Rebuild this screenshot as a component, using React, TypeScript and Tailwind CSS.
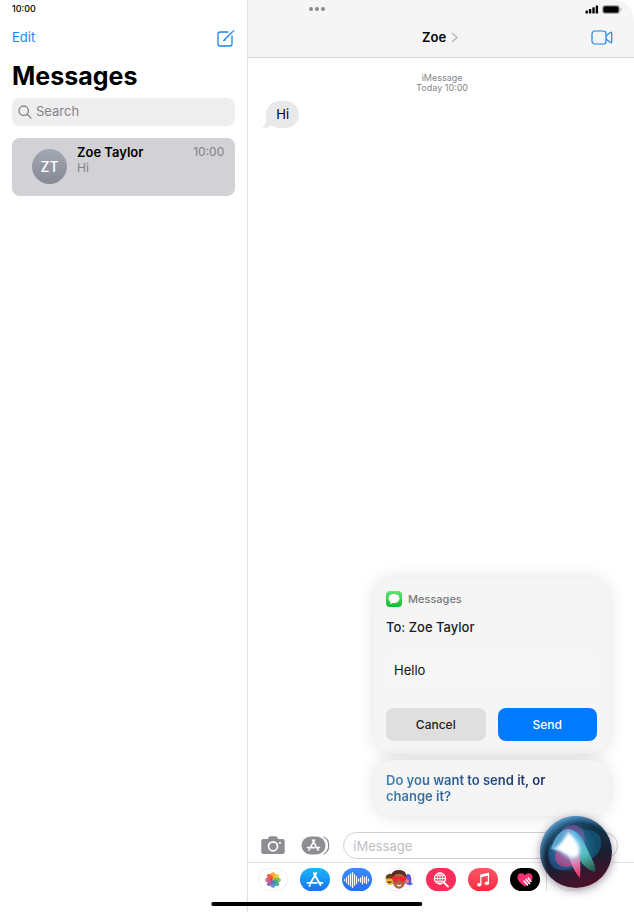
import { useState } from "react";

export default function App() {
  return (
    <div className="relative flex min-h-screen overflow-hidden bg-white font-['Inter','Liberation_Sans',sans-serif] text-black">
      <Sidebar />
      <Conversation />
      <MultitaskDots />
      <SiriPanel />
      <div className="absolute bottom-[6px] left-1/2 h-1 w-1/3 -translate-x-1/2 rounded-full bg-black" />
    </div>
  );
}

function Sidebar() {
  const [query, setQuery] = useState("");

  return (
    <aside className="flex w-[39%] shrink-0 flex-col px-3">
      <div className="flex h-[18px] items-center text-[9px] font-medium">10:00</div>

      <div className="flex h-10 items-center justify-between text-[#1a84f0]">
        <button className="text-[13px]">Edit</button>
        <button aria-label="New message">
          <ComposeIcon />
        </button>
      </div>

      <h1 className="text-[25px] leading-9 font-bold">Messages</h1>

      <label className="mt-1 flex h-7 items-center gap-1 rounded-lg bg-[#eeeeef] px-[6px] text-[#838387]">
        <SearchIcon />
        <input
          type="text"
          aria-label="Search"
          placeholder="Search"
          value={query}
          onChange={(e) => setQuery(e.target.value)}
          className="w-full min-w-0 bg-transparent text-[13px] outline-none placeholder:text-[#838387]"
        />
      </label>

      <button className="mt-3 flex h-[58px] items-start rounded-lg bg-[#d1d1d6] pr-[11px] pl-5 text-left">
        <span className="mt-[11px] flex h-[35px] w-[35px] shrink-0 items-center justify-center rounded-full bg-linear-to-b from-[#a4a8b4] to-[#858994] text-[14px] font-medium text-white">
          ZT
        </span>
        <span className="mt-[6px] ml-[10px] flex-1">
          <span className="flex items-center justify-between leading-4">
            <span className="text-[13px] font-semibold">Zoe Taylor</span>
            <span className="text-[12px] text-[#838387]">10:00</span>
          </span>
          <span className="block text-[12px] leading-4 text-[#838387]">Hi</span>
        </span>
      </button>
    </aside>
  );
}

function Conversation() {
  return (
    <main className="flex min-w-0 flex-1 flex-col border-l border-[#e2e2e4]">
      <header className="rounded-tr-[20px] border-b border-[#d8d8d8] bg-[#f5f5f5]">
        <div className="flex h-[18px] items-center justify-end gap-[3px] pr-3">
          <SignalIcon />
          <BatteryIcon />
        </div>
        <div className="grid h-[39px] grid-cols-3 items-center pr-[21px]">
          <span />
          <button className="flex items-center justify-center gap-[5px] pl-[19px] text-[13px] font-semibold">
            Zoe
            <svg width="7" height="11" viewBox="0 0 7 11" fill="none" stroke="#b5b5b8" strokeWidth="1.4">
              <path d="M1 1l5 4.5L1 10" />
            </svg>
          </button>
          <button aria-label="FaceTime" className="justify-self-end text-[#1a84f0]">
            <VideoIcon />
          </button>
        </div>
      </header>

      <section className="flex flex-1 flex-col px-[18px] pt-[15px]">
        <p className="pl-[2px] text-center text-[9px] leading-[10px] text-[#85858a]">
          <span className="block">iMessage</span>
          Today 10:00
        </p>
        <div className="relative mt-2 self-start">
          <svg className="absolute bottom-0 -left-[4px]" width="14" height="12" viewBox="0 0 14 12">
            <path d="M4 0v5c0 3-1.500 5.500-4 6.500 3.500.8 6.500-.2 8.500-2L14 4z" fill="#e9e9eb" />
          </svg>
          <p className="relative rounded-full bg-[#e9e9eb] px-[10px] text-[13px] leading-[27px]">Hi</p>
        </div>
      </section>

      <form className="flex h-[33px] items-center pr-4 pl-[13px] text-[#8d8d92]" onSubmit={(e) => e.preventDefault()}>
        <button type="button" aria-label="Camera">
          <CameraIcon />
        </button>
        <button type="button" aria-label="Apps" className="ml-4">
          <AppsIcon />
        </button>
        <input
          type="text"
          aria-label="iMessage"
          placeholder="iMessage"
          className="ml-[13px] h-[27px] min-w-0 flex-1 rounded-full border border-[#cfcfd2] px-[9px] text-[13px] text-black outline-none placeholder:text-[#bebec2]"
        />
      </form>

      <AppStrip />
    </main>
  );
}

function AppStrip() {
  return (
    <nav className="flex h-[50px] items-start gap-3 border-t border-[#e4e4e6] pt-[5px] pl-[10px]">
      <AppButton label="Photos" className="border border-[#efeff0] bg-white">
        <PhotosGlyph />
      </AppButton>
      <AppButton label="App Store" className="bg-linear-to-b from-[#1cb6fa] to-[#1b72f2]">
        <svg width="18" height="18" viewBox="0 0 18 18" fill="none" stroke="#fff" strokeWidth="1.8" strokeLinecap="round">
          <path d="M7.800 2l1.200 2.200L4.500 12M10.200 2L9 4.200l5.500 9.800M1.500 11.900h9.200M13.800 11.900h2.700M4 14l-.5.900" />
        </svg>
      </AppButton>
      <AppButton label="Audio" className="bg-linear-to-b from-[#3a8bff] to-[#2470ee]">
        <svg width="28" height="18" viewBox="0 0 28 18" stroke="#fff" strokeWidth="1.200" strokeLinecap="round">
          <path d="M1.500 8.500v1M3.500 6.500v5M5.500 4.500v9M7.500 3v12M9.500 1.500v15M11.500 3.500v11M13.500 5.500v7M15.500 8v2M17.500 7v4M19.500 5v8M21.500 6.500v5M23.500 5.500v7M25.500 8v2" />
        </svg>
      </AppButton>
      <AppButton label="Memoji" className="border border-[#efeff0] bg-white">
        <MemojiGlyph />
      </AppButton>
      <AppButton label="Images" className="bg-[#fb2d5b]">
        <svg width="18" height="18" viewBox="0 0 18 18" fill="none" stroke="#fff" strokeWidth="0.900">
          <circle cx="8" cy="7.500" r="5.500" strokeWidth="1.300" />
          <ellipse cx="8" cy="7.500" rx="2.500" ry="5.500" />
          <path d="M2.500 7.500h11M3.500 4.700h9M3.500 10.300h9M8 2v11" />
          <path d="M12.300 11.800l3.700 3.700" strokeWidth="1.800" strokeLinecap="round" />
        </svg>
      </AppButton>
      <AppButton label="Music" className="bg-linear-to-b from-[#fb5567] to-[#f9273f]">
        <svg width="16" height="18" viewBox="0 0 16 18" fill="#fff">
          <path d="M5.200 3.500L14 1.700v2.700L6.400 6v7.300H5.200z" />
          <path d="M12.800 3H14v9h-1.200z" />
          <ellipse cx="4.300" cy="13.800" rx="2.200" ry="1.800" />
          <ellipse cx="11.900" cy="12.300" rx="2.200" ry="1.800" />
        </svg>
      </AppButton>
      <AppButton label="Digital Touch" className="bg-black">
        <svg width="18" height="16" viewBox="0 0 18 16">
          <path d="M9 14.500C4 11 1.500 8.500 1.500 5.200c0-2.400 1.600-4 3.700-4C6.900 1.200 8.300 2 9 3.500c.7-1.500 2.100-2.300 3.800-2.300 2.100 0 3.700 1.600 3.700 4 0 3.300-2.500 5.800-7.500 9.300z" fill="#ff2f74" />
          <path d="M8 9l3.500 4M10.200 7.500l3.500 4.200M12.200 6l2.800 3.400" stroke="#fff" strokeWidth="1.500" strokeLinecap="round" />
        </svg>
      </AppButton>
      <div className="-ml-[6px] h-[23px] w-px bg-[#dcdcde]" />
      <div className="-ml-[3px] h-[23px] w-[30px] rounded-full border border-[#efeff0]" />
    </nav>
  );
}

type AppButtonProps = {
  label: string;
  className: string;
  children: React.ReactNode;
};

function AppButton({ label, className, children }: AppButtonProps) {
  return (
    <button
      aria-label={label}
      className={`flex h-[23px] w-[30px] shrink-0 items-center justify-center rounded-full ${className}`}
    >
      {children}
    </button>
  );
}

function MultitaskDots() {
  return (
    <div className="absolute top-[7px] left-1/2 flex -translate-x-1/2 gap-[2px]">
      <span className="h-1 w-1 rounded-full bg-[#8b8b8d]" />
      <span className="h-1 w-1 rounded-full bg-[#8b8b8d]" />
      <span className="h-1 w-1 rounded-full bg-[#8b8b8d]" />
    </div>
  );
}

function SiriPanel() {
  return (
    <>
      <div className="absolute right-[25px] bottom-24 flex w-[235px] flex-col gap-[6px]">
        <section className="rounded-[20px] bg-[#f5f5f5] px-3 pt-3 pb-[13px] shadow-[0_0_18px_rgba(0,0,0,0.13)]">
          <div className="flex h-4 items-center gap-[6px] text-[11px] font-medium text-[#7b7b7e]">
            <MessagesIcon />
            Messages
          </div>
          <h2 className="mt-[11px] text-[13px] leading-[18px] font-medium text-[#1c1c1e]">To: Zoe Taylor</h2>
          <p className="mt-[18px] mb-[21px] rounded-lg bg-[#f6f6f6] px-2 text-[13px] leading-[33px] text-[#111]">Hello</p>
          <div className="grid grid-cols-2 gap-3 text-[12px] font-medium">
            <button className="h-[33px] rounded-lg bg-[#dfdfdf] text-[#1c1c1e]">Cancel</button>
            <button className="h-[33px] rounded-lg bg-[#007aff] text-white">Send</button>
          </div>
        </section>
        <section className="rounded-[20px] bg-[#f5f5f5] p-3 shadow-[0_0_18px_rgba(0,0,0,0.13)]">
          <p className="w-[165px] bg-linear-to-r from-[#3c83b1] to-[#182964] bg-clip-text text-[13px] leading-4 font-semibold text-transparent">
            Do you want to send it, or change it?
          </p>
        </section>
      </div>
      <button aria-label="Siri" className="absolute right-[22px] bottom-6 rounded-full shadow-[0_2px_10px_rgba(60,40,70,0.5)]">
        <SiriOrb />
      </button>
    </>
  );
}

function SiriOrb() {
  return (
    <svg width="72" height="72" viewBox="0 0 72 72">
      <defs>
        <linearGradient id="orbBase" x1="0.2" y1="0" x2="0.5" y2="1">
          <stop offset="0" stopColor="#2c5f8a" />
          <stop offset="0.3" stopColor="#123449" />
          <stop offset="0.65" stopColor="#1a1f33" />
          <stop offset="1" stopColor="#4c1029" />
        </linearGradient>
        <radialGradient id="orbRim" cx="0.56" cy="0.58" r="0.6">
          <stop offset="0.8" stopColor="#5cb0ed" stopOpacity="0" />
          <stop offset="1" stopColor="#69b6ef" stopOpacity="0.75" />
        </radialGradient>
        <radialGradient id="orbGlow" cx="31" cy="32" r="26" gradientUnits="userSpaceOnUse">
          <stop offset="0" stopColor="#fff" />
          <stop offset="0.2" stopColor="#f2ffff" stopOpacity="0.85" />
          <stop offset="0.5" stopColor="#65bce8" stopOpacity="0.3" />
          <stop offset="1" stopColor="#398bc4" stopOpacity="0" />
        </radialGradient>
        <linearGradient id="orbGreen" x1="38" y1="18" x2="54" y2="56" gradientUnits="userSpaceOnUse">
          <stop offset="0" stopColor="#4fb3e0" />
          <stop offset="0.5" stopColor="#5fd6c0" />
          <stop offset="1" stopColor="#1f5a4c" />
        </linearGradient>
        <linearGradient id="orbPink" x1="30" y1="34" x2="40" y2="62" gradientUnits="userSpaceOnUse">
          <stop offset="0" stopColor="#ffd5ec" />
          <stop offset="0.5" stopColor="#ff6f9f" />
          <stop offset="1" stopColor="#e02a5e" />
        </linearGradient>
        <filter id="orbSoft" x="-20%" y="-20%" width="140%" height="140%">
          <feGaussianBlur stdDeviation="0.6" />
        </filter>
        <filter id="orbBloom" x="-50%" y="-50%" width="200%" height="200%">
          <feGaussianBlur stdDeviation="1.8" />
        </filter>
      </defs>
      <circle cx="36" cy="36" r="36" fill="url(#orbBase)" />
      <g filter="url(#orbSoft)">
        {/* outer lobes */}
        <path d="M34 15c12-4 25-1 27 9 1 11-5 18-14 20L34 34z" fill="#135d80" opacity="0.7" />
        <path d="M10 29c-3 10-2 20 6 24 9 3 18 0 24-7L30 26z" fill="#1f62a6" opacity="0.6" />
        <path d="M16 36c-3 7 1 14 9 15 7 0 11-4 12-10L28 31z" fill="#d9387f" opacity="0.75" />
        <path d="M21 17c1-8 15-11 21-4 4 6 3 14 1 21L29 28z" fill="#9a4b9f" opacity="0.55" />
        {/* petals */}
        <path d="M32 14c9 3 12 12 17 23 4 8 7 13 6 19-9-2-16-12-23-22z" fill="url(#orbGreen)" opacity="0.85" />
        <path d="M26 33l12-2c2 10 3 21 2 31-5-5-9-14-14-29z" fill="url(#orbPink)" />
        <path d="M11 33c3-10 8-19 17-20 7 0 11 7 13 21l-9 8C26 37 18 34 11 33z" fill="#6fc3f0" opacity="0.75" />
      </g>
      <circle cx="31" cy="32" r="26" fill="url(#orbGlow)" />
      <path d="M28 16c5 3 9 11 11 20-2 5-6 6-9 4-5-3-11-6-17-7 6-2 11-9 15-17z" fill="#fff" filter="url(#orbBloom)" />
      <circle cx="36" cy="36" r="36" fill="url(#orbRim)" />
    </svg>
  );
}

function ComposeIcon() {
  return (
    <svg width="18" height="17" viewBox="0 0 18 17" fill="none" stroke="currentColor" strokeWidth="1.3" strokeLinecap="round" strokeLinejoin="round">
      <path d="M11 2H3.200C1.800 2 1 2.800 1 4.200v9.600C1 15.200 1.800 16 3.200 16h9.600c1.400 0 2.200-.8 2.200-2.200V6" />
      <path d="M7 10.300L15.500 1.800M6.700 10.600l1.500-.6M16.500.8l.3.200" />
    </svg>
  );
}

function SearchIcon() {
  return (
    <svg className="shrink-0" width="14" height="14" viewBox="0 0 14 14" fill="none" stroke="currentColor" strokeWidth="1.300" strokeLinecap="round">
      <circle cx="5.700" cy="5.700" r="4.700" />
      <path d="M9.200 9.200l3.900 3.900" />
    </svg>
  );
}

function SignalIcon() {
  return (
    <svg width="14" height="9" viewBox="0 0 14 9" fill="#000">
      <rect x="0.500" y="5.500" width="2.400" height="3" rx="0.600" />
      <rect x="3.900" y="4" width="2.400" height="4.500" rx="0.600" />
      <rect x="7.300" y="2.300" width="2.400" height="6.200" rx="0.600" />
      <rect x="10.700" y="0.500" width="2.400" height="8" rx="0.600" />
    </svg>
  );
}

function BatteryIcon() {
  return (
    <svg width="20" height="9" viewBox="0 0 20 9">
      <rect x="0.500" y="0.500" width="17" height="8" rx="2.300" fill="none" stroke="#a9a9ab" />
      <rect x="1.300" y="1.300" width="15.400" height="6.400" rx="1.500" fill="#000" />
      <path d="M18.500 3v3c.7-.3 1.200-.8 1.200-1.500S19.200 3.300 18.500 3z" fill="#a9a9ab" />
    </svg>
  );
}

function VideoIcon() {
  return (
    <svg width="22" height="15" viewBox="0 0 22 15" fill="none" stroke="currentColor" strokeWidth="1.200" strokeLinejoin="round">
      <rect x="1" y="1" width="14" height="13" rx="2.800" />
      <path d="M15 6l4.500-3.600c.6-.5 1.200-.2 1.200.5v9.200c0 .7-.6 1-1.200.5L15 9" />
    </svg>
  );
}

function CameraIcon() {
  return (
    <svg width="24" height="19" viewBox="0 0 24 19">
      <path
        d="M2.500 3h4.200l1.200-1.900C8.300.5 8.800.2 9.500.2h5c.7 0 1.200.3 1.600.9L17.300 3h4.200c1.400 0 2.200.8 2.200 2.200v10.600c0 1.400-.8 2.200-2.200 2.200h-19C1.100 18 .3 17.200.3 15.800V5.200C.3 3.800 1.100 3 2.500 3z"
        fill="currentColor"
      />
      <circle cx="12" cy="10.300" r="4.500" fill="none" stroke="#fff" strokeWidth="1.700" />
      <circle cx="19" cy="6.800" r="1.100" fill="#fff" />
    </svg>
  );
}

function AppsIcon() {
  return (
    <svg width="29" height="19" viewBox="0 0 29 19" fill="none">
      <rect x="0.500" y="0.500" width="24" height="18" rx="9" fill="currentColor" />
      <path d="M22.500.8c3.400 1.400 5.200 4.700 5.200 8.700s-1.800 7.300-5.200 8.700" stroke="currentColor" strokeWidth="1.300" />
      <path d="M23 1.500c2.300 2 3 4.800 3 8s-.7 6-3 8" stroke="#fff" />
      <path
        d="M11.500 4l1 1.800L8.900 12.200M13.500 4l-1 1.800 4.700 8.400M6.500 11.600h7.300M16.200 11.600h2.300M8.300 13.700l-.3.500"
        stroke="#fff"
        strokeWidth="1.600"
        strokeLinecap="round"
      />
    </svg>
  );
}

function MessagesIcon() {
  return (
    <svg width="16" height="16" viewBox="0 0 16 16">
      <defs>
        <linearGradient id="msgGreen" x1="0" y1="0" x2="0" y2="1">
          <stop offset="0" stopColor="#62e571" />
          <stop offset="1" stopColor="#11bc2c" />
        </linearGradient>
      </defs>
      <rect width="16" height="16" rx="4" fill="url(#msgGreen)" />
      <ellipse cx="8" cy="7.600" rx="5.500" ry="4.600" fill="#fff" />
      <path d="M5 10.500c0 1.200-.5 2-1.300 2.600 1.500 0 2.700-.6 3.600-1.500z" fill="#fff" />
    </svg>
  );
}

function PhotosGlyph() {
  const petals = ["#f79a1b", "#e0cb1f", "#74b53a", "#2ba58a", "#4580c8", "#8259ae", "#cf4d8b", "#ee4632"];
  return (
    <svg className="shrink-0" width="16" height="16" viewBox="0 0 16 16">
      {petals.map((color, i) => (
        <rect
          key={color}
          x="5.700"
          y="0.200"
          width="4.600"
          height="7.300"
          rx="2.300"
          fill={color}
          fillOpacity="0.850"
          transform={`rotate(${i * 45} 8 8)`}
        />
      ))}
    </svg>
  );
}

function MemojiGlyph() {
  return (
    <svg className="shrink-0" width="30" height="21" viewBox="0 0 30 21">
      <ellipse cx="6" cy="10.500" rx="4.300" ry="5.500" fill="#e8b53a" />
      <path d="M1.700 9c0-5 8-6 9-1l-1 1.500H2z" fill="#60411f" />
      <path d="M3 12.500c1 2 4 2 5 0z" fill="#57331e" />
      <ellipse cx="24" cy="11" rx="3.500" ry="5" fill="#a573dd" />
      <path d="M22 6.500c2-3 5-1 5 2v5l2 1.500-4 1.500z" fill="#5a55d0" />
      <circle cx="23.500" cy="12" r="1.600" fill="#ed8a5c" />
      <path d="M8 10C6 3 11 .5 15 1c5-.5 9 3.500 7 9.500z" fill="#5c3024" />
      <ellipse cx="15" cy="12" rx="6.300" ry="7.800" fill="#ad6440" />
      <path d="M8.500 8c2-2.500 4-3 6-3 3 0 6 0 7 3l-1-4.500-6-2-5 2z" fill="#5c3024" />
      <path d="M11.500 13.500C9 11.500 7.800 10.300 7.800 8.900c0-2 2.700-2.400 3.700-.6 1-1.800 3.500-1.400 3.500.6 0 1.200-1 2.600-3.500 4.600zM18.500 13.500c-2.500-2-3.500-3.400-3.500-4.600 0-2 2.500-2.400 3.500-.6 1-1.800 3.700-1.400 3.700.6 0 1.400-1.200 2.600-3.700 4.600z" fill="#f52430" />
      <path d="M12.500 15.500c1.500.6 3.500.6 5 0-.5 2.500-4.500 2.500-5 0z" fill="#fff" />
    </svg>
  );
}
